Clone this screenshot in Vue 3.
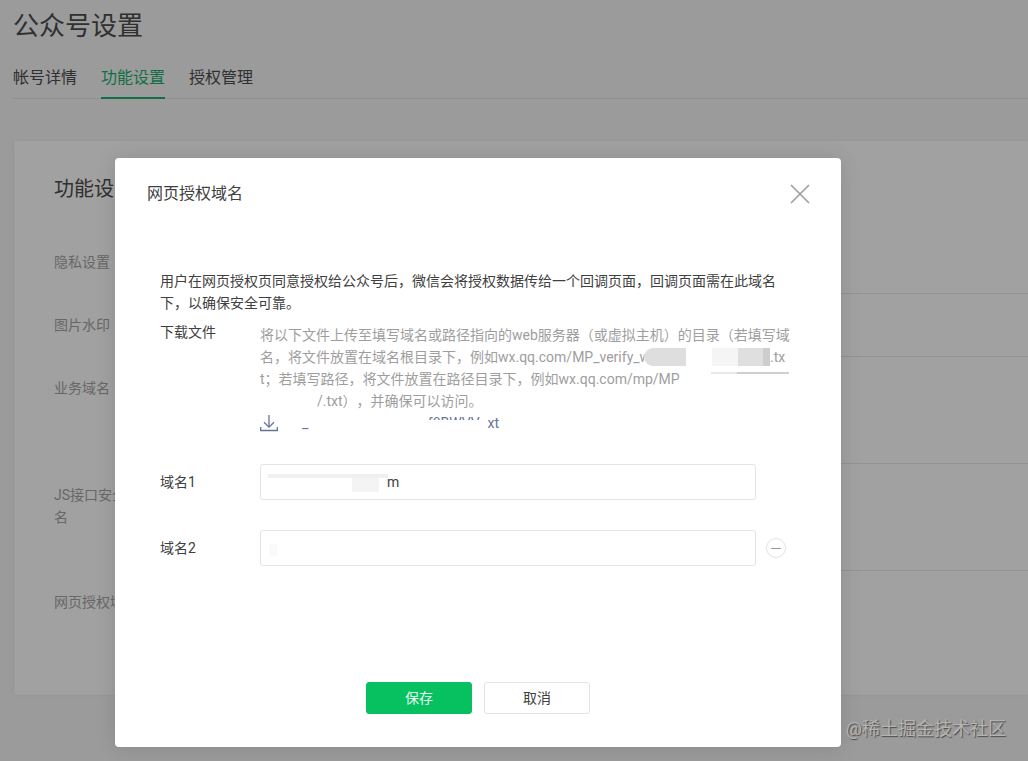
<script setup>
import { ref } from 'vue'

const tabs = ['帐号详情', '功能设置', '授权管理']
const activeTab = ref(1)
const settings = [
  { label: '隐私设置' },
  { label: '图片水印' },
  { label: '业务域名', tall: true },
  { label: 'JS接口安全域名', tall: true },
  { label: '网页授权域名', tall: true },
]
const domain1 = ref('m')
const domain2 = ref('')
</script>

<template>
  <div class="screen">
    <main class="page">
      <h1 class="page-title">公众号设置</h1>
      <nav class="tabs">
        <a
          v-for="(tab, i) in tabs"
          :key="tab"
          href="#"
          class="tab"
          :class="{ active: i === activeTab }"
          @click.prevent="activeTab = i"
        >{{ tab }}</a>
      </nav>
      <section class="card">
        <h2 class="card-title">功能设置</h2>
        <div v-for="item in settings" :key="item.label" class="row" :class="{ tall: item.tall }">
          <span class="row-label">{{ item.label }}</span>
          <div class="row-value"></div>
        </div>
      </section>
    </main>

    <div class="mask">
      <div class="dialog" role="dialog" aria-labelledby="dialog-title">
        <header class="dialog-head">
          <h3 id="dialog-title" class="dialog-title">网页授权域名</h3>
          <button type="button" class="close" aria-label="关闭">
            <svg width="20" height="20" viewBox="0 0 20 20" fill="none" stroke="#a0a0a0" stroke-width="1.7">
              <path d="M1 1L19 19M19 1L1 19" />
            </svg>
          </button>
        </header>

        <form class="dialog-body" @submit.prevent>
          <p class="intro">用户在网页授权页同意授权给公众号后，微信会将授权数据传给一个回调页面，回调页面需在此域名下，以确保安全可靠。</p>

          <div class="download">
            <span class="label">下载文件</span>
            <div class="help">
              <div class="line">将以下文件上传至填写域名或路径指向的web服务器（或虚拟主机）的目录（若填写域</div>
              <div class="line">
                名，将文件放置在域名根目录下，例如wx.qq.com/MP_verify_w<span class="mosaic"><i class="m1"></i><i class="m2"></i><i class="m3"></i><i class="m4"></i><i class="m5"></i></span>.tx
              </div>
              <div class="line">
                t；若填写路径，将文件放置在路径目录下，例如wx.qq.com/mp/MP<span class="strip"></span>
              </div>
              <div class="line indent">/.txt），并确保可以访问。</div>
              <a href="#" class="file" @click.prevent>
                <svg width="18" height="18" viewBox="0 0 18 18" fill="none" stroke="#66739c" stroke-width="1.3">
                  <path d="M9 1V13M4 8.200L9 13.200L14 8.200M.7 13V16.500H17.300V13" />
                </svg>
                <span class="file-start">_</span>
                <span class="file-mid">-f8BWVV</span>
                <span>xt</span>
              </a>
            </div>
          </div>

          <div class="field">
            <label class="label" for="domain1">域名1</label>
            <div class="box">
              <input id="domain1" v-model="domain1" type="text" class="masked" />
              <span class="smudge top"></span>
              <span class="smudge block"></span>
            </div>
          </div>
          <div class="field">
            <label class="label" for="domain2">域名2</label>
            <div class="box">
              <input id="domain2" v-model="domain2" type="text" />
              <span class="smudge faint"></span>
            </div>
            <button type="button" class="remove" aria-label="删除">
              <svg width="20" height="20" viewBox="0 0 20 20" fill="none">
                <circle cx="10" cy="10" r="9.500" stroke="#e2e2e2" />
                <path d="M5 10.500H15" stroke="#9a9a9a" />
              </svg>
            </button>
          </div>

          <footer class="actions">
            <button type="submit" class="btn primary">保存</button>
            <button type="button" class="btn">取消</button>
          </footer>
        </form>
      </div>
    </div>

    <div class="watermark">@稀土掘金技术社区</div>
  </div>
</template>

<style>
body {
  margin: 0;
}
</style>

<style scoped>
.screen {
  position: relative;
  min-height: 100vh;
  box-sizing: border-box;
  overflow: hidden;
  background: #f6f6f6;
  color: #404040;
  font: 14px/22px Roboto, "Noto Sans CJK SC", sans-serif;
  text-spacing-trim: space-all;
}
.page {
  padding: 6px 0 66px 13px;
  color: #4c4c4c;
}
h1, h2, h3, p {
  margin: 0;
  font-weight: 400;
}
.page-title {
  font-size: 26px;
  line-height: 40px;
}
.tabs {
  display: flex;
  gap: 24px;
  margin-top: 18px;
  border-bottom: 1px solid #e4e4e4;
}
.tab {
  margin-bottom: -1px;
  padding-bottom: 5px;
  border-bottom: 2px solid transparent;
  color: inherit;
  font-size: 16px;
  line-height: 28px;
  text-decoration: none;
}
.tab.active {
  color: #18b070;
  border-bottom-color: #18b070;
}
.card {
  margin: 42px 0 0 1px;
  padding: 28px 0 16px;
  background: #fff;
  border: 1px solid #fafafa;
  border-width: 0 0 1px 1px;
  box-shadow: 0 0 4px rgba(0, 0, 0, 0.06);
}
.card-title {
  padding-left: 39px;
  margin-bottom: 22px;
  font-size: 20px;
  line-height: 40px;
}
.row {
  display: flex;
  min-height: 63px;
  padding-left: 39px;
}
.row.tall {
  min-height: 107px;
}
.row-label {
  width: 90px;
  padding-top: 20px;
  color: #a4a4a4;
}
.row-value {
  flex: 1;
  border-bottom: 1px solid #e8e8e8;
}
.row:last-child .row-value {
  border-bottom: 0;
}
.mask {
  position: absolute;
  inset: 0;
  display: flex;
  align-items: flex-start;
  padding: 158px 187px 14px 115px;
  background: rgba(0, 0, 0, 0.37);
}
.dialog {
  flex: 1;
  min-width: 0;
  background: #fff;
  border-radius: 4px;
  box-shadow: 0 1px 20px rgba(0, 0, 0, 0.12);
}
.dialog-head {
  display: flex;
  align-items: center;
  justify-content: space-between;
  height: 72px;
  padding: 0 31px 0 32px;
}
.dialog-title {
  font-size: 16px;
  line-height: 24px;
}
button {
  font: inherit;
  cursor: pointer;
}
.close, .remove {
  display: flex;
  padding: 0;
  border: 0;
  background: none;
}
.dialog-body {
  padding: 40px 45px 33px;
}
.intro {
  padding-right: 12px;
}
.label {
  flex: none;
  width: 100px;
}
.download {
  display: flex;
  margin-top: 7px;
}
.help {
  flex: 1;
  min-width: 0;
  padding-top: 3px;
  color: #9e9e9e;
}
.line {
  display: flex;
  white-space: nowrap;
}
.indent {
  padding-left: 57px;
}
.mosaic {
  display: flex;
  align-self: center;
  height: 18px;
  margin-left: -6px;
}
.mosaic i {
  display: block;
}
.m1 {
  width: 42px;
  border-radius: 9px 0 0 9px;
  background: #dedede;
}
.m2 {
  width: 26px;
}
.m3 {
  width: 26px;
  background: #f5f5f5;
}
.m4 {
  width: 25px;
  background: #dfdfdf;
}
.m5 {
  width: 7px;
  background: #cdcdcd;
}
.strip {
  width: 78px;
  height: 2px;
  margin: 0 0 12px 31px;
  align-self: center;
  background: linear-gradient(90deg, #e8e8e8 0 26px, #cfcfcf 26px);
}
.file {
  display: flex;
  color: #66739c;
  text-decoration: none;
}
.file svg {
  margin-top: 2px;
}
.file-start {
  width: 122px;
  padding-left: 24px;
}
.file-mid {
  position: relative;
  margin-right: 8px;
}
.file-mid::after {
  content: "";
  position: absolute;
  inset: 8px 0 0;
  background: #fff;
}
.field {
  display: flex;
  align-items: center;
  margin-top: 30px;
}
.box {
  position: relative;
  flex: 1;
  max-width: 496px;
}
input {
  display: block;
  box-sizing: border-box;
  width: 100%;
  height: 36px;
  padding: 0 10px;
  border: 1px solid #e4e4e4;
  border-radius: 3px;
  background: #fff;
  color: #404040;
  font: inherit;
  outline: none;
}
input.masked {
  padding-left: 126px;
}
.smudge {
  position: absolute;
  pointer-events: none;
}
.smudge.top {
  left: 8px;
  top: 10px;
  width: 120px;
  height: 4px;
  background: #f0f0f0;
}
.smudge.block {
  left: 92px;
  top: 14px;
  width: 27px;
  height: 14px;
  background: #f4f4f4;
}
.smudge.faint {
  left: 9px;
  top: 14px;
  width: 8px;
  height: 12px;
  background: #fafafa;
}
.remove {
  margin-left: 10px;
}
.actions {
  display: flex;
  justify-content: center;
  gap: 12px;
  margin-top: 116px;
}
.btn {
  box-sizing: border-box;
  width: 106px;
  height: 32px;
  padding: 0;
  border: 1px solid #e4e4e4;
  border-radius: 3px;
  background: #fff;
  color: #404040;
}
.btn.primary {
  border-color: #07c160;
  background: #07c160;
  color: #e6f9ef;
}
.watermark {
  position: absolute;
  right: 22px;
  bottom: 20px;
  color: #b4b4b4;
  font-size: 18px;
  line-height: 24px;
  text-shadow: 1px 1px 1px #4a4a4a;
}
</style>
